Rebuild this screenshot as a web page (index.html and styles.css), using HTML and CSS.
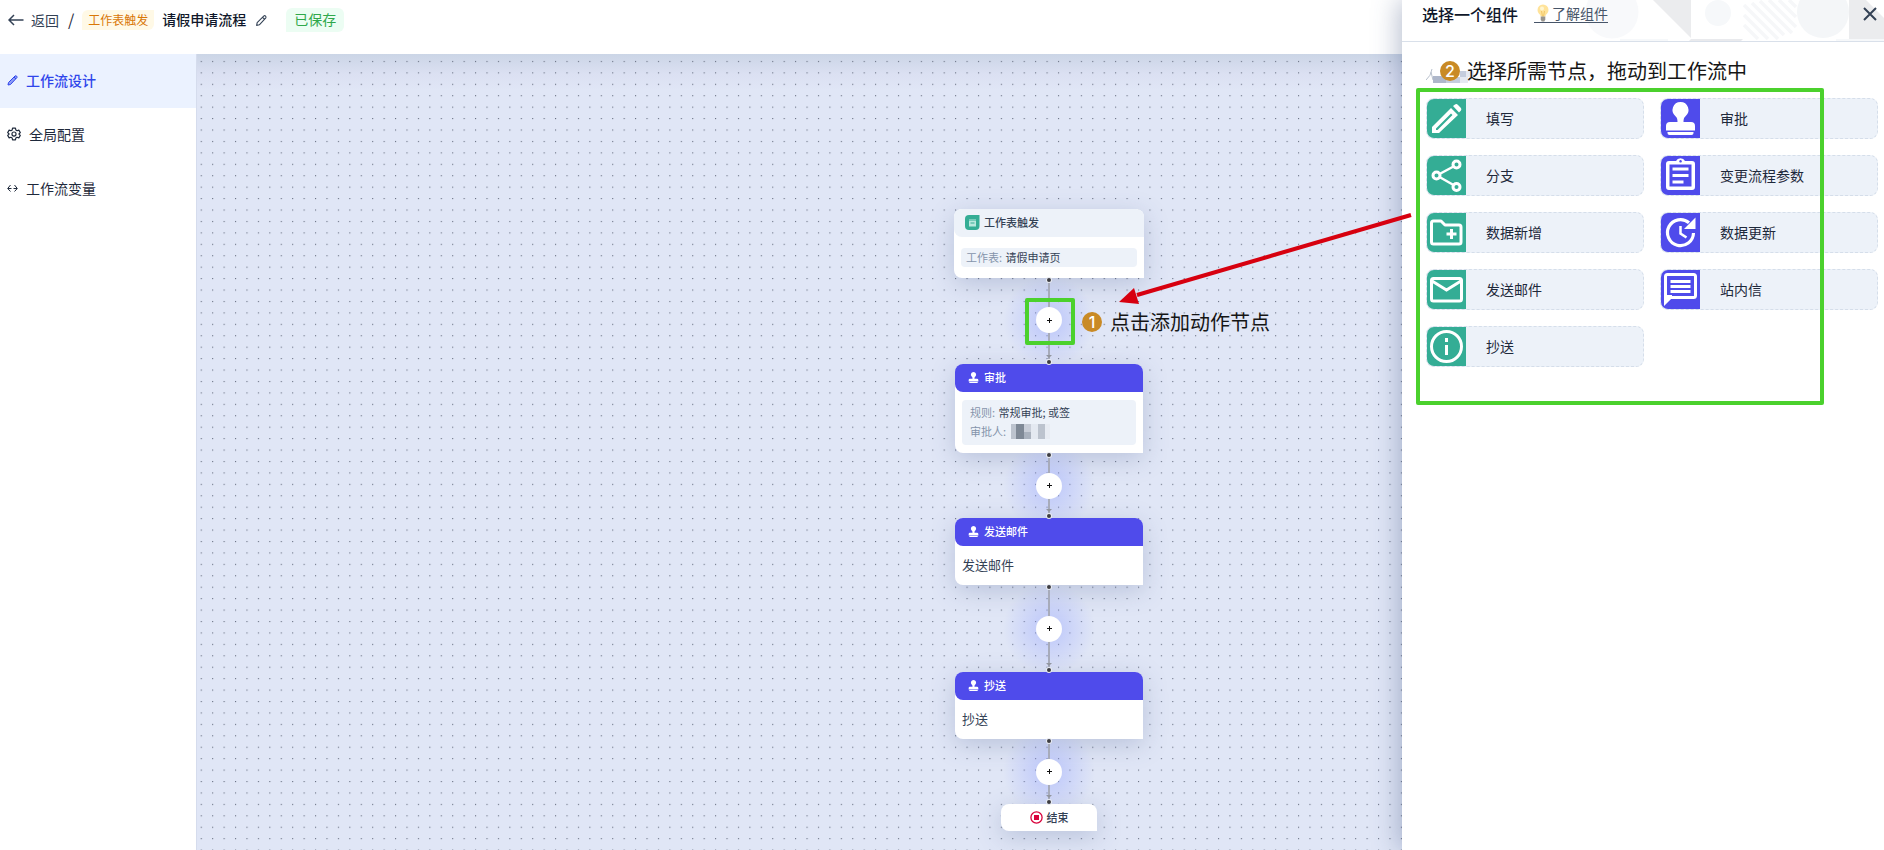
FILE: index.html
```html
<!DOCTYPE html>
<html lang="zh-CN">
<head>
<meta charset="utf-8">
<title>请假申请流程</title>
<link rel="stylesheet" href="styles.css">
</head>
<body>
<svg class="defs" aria-hidden="true">
  <symbol id="stamp" viewBox="0 0 39 39">
    <path fill="currentColor" d="M19.500 3a8 8 0 0 1 5 14.200c-1.500 1.400-2 2.500-2 5.800h7.500q4 0 4 4v4.500h-29V27q0-4 4-4h7.500c0-3.300-.5-4.400-2-5.800A8 8 0 0 1 19.500 3z"/>
    <path fill="currentColor" d="M6.500 33h26v1q0 2-2 2h-22q-2 0-2-2z"/>
  </symbol>
  <symbol id="pencil" viewBox="0 0 24 24">
    <path fill="none" stroke="currentColor" stroke-width="2" stroke-linejoin="round" d="M3 21l1-5L16.500 3.500q1.500-1 3 .5t.5 3L8 20zM14 6l4 4"/>
  </symbol>
</svg>

<div class="app">
  <header class="topbar">
    <button class="back" type="button">
      <svg width="16" height="12" viewBox="0 0 16 12"><path d="M15.500 6H1M6 1L1 6l5 5" fill="none" stroke="currentColor" stroke-width="1.500"/></svg>
      返回
    </button>
    <span class="slash">/</span>
    <span class="tag">工作表触发</span>
    <h1 class="title">请假申请流程</h1>
    <button class="edit" type="button" aria-label="编辑名称"><svg width="13" height="13"><use href="#pencil"/></svg></button>
    <span class="saved">已保存</span>
  </header>

  <div class="body">
    <nav class="sidebar">
      <a class="nav-item active" href="#design"><svg width="11" height="11" viewBox="0 0 11 11"><path d="M1 10l.5-2.500L8 1q1-.5 1.500 0t.5 1.500L3.500 9.500zM7 2l2 2" fill="currentColor" fill-opacity=".5" stroke="currentColor"/></svg>工作流设计</a>
      <a class="nav-item" href="#config"><svg width="14" height="14" viewBox="0 0 24 24" fill="none" stroke="currentColor" stroke-width="2" stroke-linejoin="round"><path d="M9.500 2h5l.7 3.200 2 1.200 3.100-1 2.500 4.300L20.400 12l2.400 2.300-2.500 4.300-3.100-1-2 1.200-.7 3.200h-5l-.7-3.200-2-1.200-3.100 1-2.500-4.300L3.600 12 1.200 9.700l2.500-4.300 3.100 1 2-1.200z"/><circle cx="12" cy="12" r="3.500"/></svg>全局配置</a>
      <a class="nav-item" href="#vars"><svg width="11" height="9" viewBox="0 0 11 9"><path d="M3.500 1L.7 4.500l2.800 3M7.500 1l2.800 3.500-2.800 3M1 4.500h3.500M6.500 4.500H10" fill="none" stroke="currentColor"/></svg>工作流变量</a>
    </nav>

    <main class="canvas">
      <svg class="dots" aria-hidden="true">
        <defs><pattern id="grid" x="3.700" y="6.900" width="11.430" height="11.430" patternUnits="userSpaceOnUse"><rect width="1.100" height="1.100" fill="#646c7e"/></pattern></defs>
        <rect width="100%" height="100%" fill="url(#grid)"/>
      </svg>
      <div class="flow">
        <section class="node trigger">
          <h2 class="node-head"><svg width="15" height="15" viewBox="0 0 15 15"><path d="M4 0h10.500v11q0 4-4 4H4q-4 0-4-4V4q0-4 4-4z" fill="#34ad95"/><path d="M4 4h7v7.500H4z" fill="#b9e8de"/><path d="M4 5h7M5.500 8h4" stroke="#34ad95"/></svg>工作表触发</h2>
          <div class="node-body"><p class="field"><span class="key">工作表:</span> 请假申请页</p></div>
        </section>
        <div class="link first"><button class="add" type="button" aria-label="添加节点"></button></div>

        <section class="node action">
          <h2 class="node-head"><svg width="13" height="13"><use href="#stamp"/></svg>审批</h2>
          <div class="node-body rules">
            <div class="field tall">
              <p><span class="key">规则:</span> 常规审批; 或签</p>
              <p class="person"><span class="key">审批人:</span>
                <svg width="40" height="15" viewBox="0 0 40 15"><path fill="#bcc3ce" d="M0 0h5v15H0z"/><path fill="#7f8996" d="M5 0h8v15H5z"/><path fill="#c9ced8" d="M13 0h7v8h-7z"/><path fill="#aab2be" d="M13 8h7v7h-7z"/><path fill="#e4e9f1" d="M20 0h7v15h-7z"/><path fill="#bcc3ce" d="M27 0h7v15h-7z"/><path fill="#e8ecf3" d="M34 0h5v15h-5z"/></svg></p>
            </div>
          </div>
        </section>
        <div class="link short"><button class="add" type="button" aria-label="添加节点"></button></div>

        <section class="node action">
          <h2 class="node-head"><svg width="13" height="13"><use href="#stamp"/></svg>发送邮件</h2>
          <p class="node-body plain">发送邮件</p>
        </section>
        <div class="link"><button class="add" type="button" aria-label="添加节点"></button></div>

        <section class="node action">
          <h2 class="node-head"><svg width="13" height="13"><use href="#stamp"/></svg>抄送</h2>
          <p class="node-body plain">抄送</p>
        </section>
        <div class="link short"><button class="add" type="button" aria-label="添加节点"></button></div>

        <div class="end"><svg width="13" height="13" viewBox="0 0 13 13"><circle cx="6.500" cy="6.500" r="5.600" fill="none" stroke="#d9043d" stroke-width="1.300"/><path d="M4 4h5v5H4z" fill="#d9043d"/></svg>结束</div>
      </div>
    </main>
  </div>

  <aside class="drawer">
    <div class="drawer-head">
      <svg class="decor" width="304" height="41" viewBox="0 0 304 41" aria-hidden="true">
        <circle cx="32" cy="12" r="26.500" fill="#f8f9fb"/>
        <path d="M73 0h38v38z" fill="#ebecee"/>
        <circle cx="138" cy="13" r="13" fill="#f6f8fa"/>
        <path d="M164 5l34 34M164 15l24 24M164 25l14 14M172 3l32 32M180 1l32 32M189 0l27 27M199 0l17 17M209 0l7 7" stroke="#f6f7f9" stroke-width="3.500"/>
        <circle cx="243" cy="12" r="26" fill="#f4f6f8"/>
        <path d="M269 0h17l18 18v21h-35z" fill="#ebecee"/>
        <path d="M111 39h52l-2 2h-52z" fill="#e9eaed"/>
        <path d="M40 39h48v2H40zM256 39h48v2h-48z" fill="#f6f8fa"/>
      </svg>
      <h2 class="drawer-title">选择一个组件</h2>
      <a class="learn" href="#learn"><svg width="18" height="18" viewBox="0 0 18 18"><circle cx="9" cy="6" r="5.500" fill="#ffe39a"/><path d="M5 8.500q1.500 1.500 1.500 4h5q0-2.500 1.500-4z" fill="#ffe39a"/><path d="M7.500 7l1 5.500M10.500 7l-1 5.500" stroke="#f2c766" fill="none"/><circle cx="8" cy="4.500" r="2" fill="#fff6d2"/><path d="M6.700 12.500h4.600v3l-1 2H7.700l-1-2z" fill="#99958e"/></svg>了解组件</a>
      <button class="close" type="button" aria-label="关闭"><svg width="14" height="14" viewBox="0 0 14 14"><path d="M1 1l12 12M13 1L1 13" stroke="currentColor" stroke-width="2"/></svg></button>
    </div>

    <div class="drawer-note">
      <svg class="smudge" width="48" height="15" viewBox="0 0 48 15" aria-hidden="true"><path d="M6 0Q5 7 0 11M5 3l2 8" stroke="#b7bfcb" fill="none"/><path fill="#aeb7ca" d="M7 7h13v7H7z"/><path fill="#c5cddd" d="M34 2h6v6h-6zM20 8h14v6H20z"/><path fill="#e5e9f1" d="M34 8h8v6h-8zM40 2h8v6h-8z"/></svg>
      <span class="badge">2</span>
      <p class="note">选择所需节点，拖动到工作流中</p>
    </div>

    <div class="cards">
      <button class="card" type="button"><span class="tile green"><svg viewBox="0 0 39 39"><path fill="#fff" fill-rule="evenodd" d="M5 28L24 9l7 7-19 18H5zm4 1.500v1.500h1.500L25.500 16 24 14.500zM26 7l2-1.500q1.500-1 3 .5l2.500 2.500q1.500 1.500.5 3L32 13.500z"/></svg></span>填写</button>
      <button class="card" type="button"><span class="tile blue"><svg><use href="#stamp"/></svg></span>审批</button>
      <button class="card" type="button"><span class="tile green"><svg viewBox="0 0 39 39" fill="none" stroke="#fff" stroke-width="3"><circle cx="29.500" cy="8.500" r="3.500"/><circle cx="9.500" cy="19.500" r="3.500"/><circle cx="29.500" cy="31" r="3.500"/><path stroke-width="2.500" d="M26.500 10.500L12.500 18M12.500 21l14 8"/></svg></span>分支</button>
      <button class="card" type="button"><span class="tile blue"><svg viewBox="0 0 39 39"><path fill="#fff" fill-rule="evenodd" d="M8 5h7a5 5 0 0 1 9 0h7q3 0 3 3v23q0 3-3 3H8q-3 0-3-3V8q0-3 3-3zm.5 3.500v22h22v-22zM19.500 4a1.300 1.300 0 1 0 .1 0z"/><path stroke="#fff" stroke-width="3" d="M11.500 13h16M11.500 19.500h16M11.500 26h11"/></svg></span>变更流程参数</button>
      <button class="card" type="button"><span class="tile green"><svg viewBox="0 0 39 39" fill="none" stroke="#fff"><path stroke-width="3" stroke-linejoin="round" d="M4.500 10q0-2 2-2H14l4 4h14q2 0 2 2v15q0 2-2 2H6.500q-2 0-2-2z"/><path stroke-width="3" d="M24.500 16v10M19.500 21h10"/></svg></span>数据新增</button>
      <button class="card" type="button"><span class="tile blue"><svg viewBox="0 0 39 39"><path fill="none" stroke="#fff" stroke-width="3.200" d="M32.500 20A13 13 0 1 1 28 9.800"/><path fill="#fff" d="M34.500 4.500V16H23z"/><path fill="none" stroke="#fff" stroke-width="2.500" d="M19.500 13v7.500l6 4"/></svg></span>数据更新</button>
      <button class="card" type="button"><span class="tile green"><svg viewBox="0 0 39 39" fill="none" stroke="#fff" stroke-width="3"><rect x="4.500" y="8.500" width="30" height="22.500" rx="2"/><path d="M5 11l14.500 9L34 11"/></svg></span>发送邮件</button>
      <button class="card" type="button"><span class="tile blue"><svg viewBox="0 0 39 39" fill="none" stroke="#fff" stroke-width="3"><path d="M4.500 6.500q0-2 2-2h26q2 0 2 2v19q0 2-2 2H9L4.500 32z"/><path fill="#fff" stroke="none" d="M3 25h8v3l-8 8z"/><path d="M9.500 11.500h20M9.500 16.500h20M9.500 21.500h20"/></svg></span>站内信</button>
      <button class="card" type="button"><span class="tile green"><svg viewBox="0 0 39 39" fill="none" stroke="#fff" stroke-width="3"><circle cx="19.500" cy="19.500" r="15"/><path d="M19.500 11v4M19.500 18v10"/></svg></span>抄送</button>
    </div>
    <div class="frame frame-cards"></div>
  </aside>

  <div class="frame frame-add"></div>
  <div class="step"><span class="badge">1</span><p class="note">点击添加动作节点</p></div>
  <svg class="arrow" width="294" height="94" viewBox="0 0 294 94" aria-hidden="true"><path d="M292 4L18 84" stroke="#d7000f" stroke-width="4"/><path d="M0 91L15 77l5 16z" fill="#d7000f"/></svg>
</div>
</body>
</html>
```
FILE: styles.css
```css
* { box-sizing: border-box; }

body {
  margin: 0;
  font-family: "Noto Sans CJK SC", "Noto Sans", sans-serif;
  font-size: 14px;
  line-height: 20px;
  color: #1e293b;
  background: #fff;
}

h1, h2, p { margin: 0; }

button {
  padding: 0;
  border: 0;
  background: none;
  font: inherit;
  color: inherit;
}

a { color: inherit; text-decoration: none; }

svg { display: block; flex: none; }

.defs { position: absolute; width: 0; height: 0; }

.app {
  position: relative;
  display: flex;
  flex-direction: column;
  height: 100vh;
  overflow: hidden;
}

/* Top bar */
.topbar {
  display: flex;
  align-items: flex-start;
  height: 54px;
  padding: 8px;
}

.topbar > * { height: 24px; line-height: 23px; }

.back { display: flex; align-items: center; gap: 7px; color: #334155; }

.slash { margin: 0 8px 0 9px; font-size: 16px; }

.topbar .tag {
  height: 20px;
  margin: 2px 8px 0 0;
  padding: 0 6px;
  border-radius: 6px 0;
  background: #fff9e6;
  color: #d97706;
  font-size: 12px;
  line-height: 19px;
}

.title { font-size: 14px; font-weight: 500; color: #0f172a; }

.edit { display: flex; align-items: center; margin: 0 18px 0 9px; color: #334155; }

.saved {
  padding: 0 8px;
  border-radius: 6px 6px 6px 0;
  background: #ecfdf3;
  color: #2fa84a;
}

/* Body */
.body { display: flex; flex: 1; min-height: 0; }

.sidebar { width: 196px; flex: none; }

.nav-item {
  display: flex;
  align-items: center;
  gap: 8px;
  height: 54px;
  padding: 0 7px 2px;
}

.nav-item.active { background: #ebf2ff; color: #2f46eb; font-weight: 500; }

.canvas {
  position: relative;
  flex: 1;
  overflow: hidden;
  border-left: 1px solid #d5dced;
  background: linear-gradient(#cbd5e6, #dbe0f2 20px, #e0e6f6 36px);
}

.dots { position: absolute; inset: 0; width: 100%; height: 100%; }

.flow {
  position: absolute;
  left: 757px;
  top: 155px;
  width: 190px;
  display: flex;
  flex-direction: column;
  align-items: center;
}

.node {
  width: 188px;
  border-radius: 8px 8px 0 8px;
  background: #fff;
  box-shadow: 0 6px 24px rgba(71, 91, 140, .25);
  font-size: 11px;
  line-height: 19px;
  color: #334155;
}

.trigger { width: 190px; }

.node-head {
  display: flex;
  align-items: center;
  gap: 4px;
  height: 28px;
  padding: 0 11px 1px;
  border-radius: 8px 8px 0 8px;
  background: #edf2f9;
  font-size: 11px;
  font-weight: 500;
}

.action .node-head { padding-left: 12px; background: #4f4beb; color: #fff; }

.node-body { padding: 11px 7px; }

.field { padding: 0 5px; border-radius: 4px; background: #edf2f9; }

.field.tall { padding: 3px 8px 4px; }

.person { display: flex; align-items: center; gap: 4px; }

.node-body.rules { padding: 8px 7px; }

.key { margin-right: 1px; color: #8594ab; }

.node-body.plain { padding: 9px 7px 10px; font-size: 13px; line-height: 20px; }

/* Connector between two nodes */
.link {
  position: relative;
  display: flex;
  align-items: center;
  justify-content: center;
  width: 120px;
  height: 87px;
  background:
    linear-gradient(#a7abba, #a7abba) center / 2px 100% no-repeat,
    radial-gradient(circle at center, rgba(150, 165, 255, .5), rgba(150, 165, 255, 0) 46px);
}

.link.first { height: 86px; padding-bottom: 2px; }

.link.short { height: 65px; }

.link::before,
.link::after {
  content: "";
  position: absolute;
  left: 58px;
  width: 4px;
  height: 4px;
  border-radius: 50%;
  background: #3d3d42;
  box-shadow: 0 0 0 1px #e8ebf2;
}

.link::before { top: 0; }

.link::after { bottom: 0; }

.add {
  width: 26px;
  height: 26px;
  border-radius: 50%;
  background:
    linear-gradient(#111, #111) center / 5px 1px no-repeat,
    linear-gradient(#111, #111) center / 1px 5px no-repeat,
    #fff;
}

.add::after {
  content: "";
  position: absolute;
  left: 57px;
  bottom: 6px;
  border: 3px solid transparent;
  border-top-color: #92969f;
  border-bottom: 0;
}

.end {
  display: flex;
  align-items: center;
  justify-content: center;
  gap: 4px;
  width: 96px;
  height: 27px;
  padding-bottom: 1px;
  border-radius: 8px 8px 0 8px;
  background: #fff;
  box-shadow: 0 6px 24px rgba(71, 91, 140, .25);
  font-size: 11px;
  font-weight: 500;
  color: #334155;
}

/* Component drawer */
.drawer {
  position: absolute;
  top: 0;
  right: 0;
  bottom: 0;
  width: 482px;
  background: #fff;
  box-shadow: -4px 0 24px rgba(60, 80, 125, .35);
}

.drawer-head {
  position: relative;
  display: flex;
  align-items: center;
  height: 42px;
  padding: 0 7px 14px 20px;
  border-bottom: 1px solid #d9e0ea;
}

.decor { position: absolute; top: 0; right: 0; }

.drawer-title { font-size: 16px; font-weight: 500; color: #0f172a; }

.learn {
  position: relative;
  display: flex;
  align-items: center;
  height: 18px;
  margin-left: 16px;
  border-bottom: 1px solid #475569;
  color: #475569;
}

.close { position: relative; margin-left: auto; color: #334155; }

.drawer-note {
  position: relative;
  display: flex;
  align-items: center;
  gap: 7px;
  padding: 14px 38px 12px;
}

.smudge { position: absolute; left: 24px; top: 27px; }

.badge {
  position: relative;
  width: 20px;
  height: 20px;
  border-radius: 50%;
  background: #c98a25;
  color: #fff;
  font: 500 16px/20px Inter, sans-serif;
  text-align: center;
}

.note { position: relative; font-size: 20px; line-height: 30px; color: #151515; }

.cards {
  display: grid;
  grid-template-columns: 1fr 1fr;
  gap: 16px;
  padding: 0 6px 0 24px;
}

.card {
  display: flex;
  align-items: center;
  gap: 20px;
  height: 41px;
  padding-bottom: 2px;
  overflow: hidden;
  border: 1px dashed #d5deea;
  border-radius: 8px;
  background: #edf2f9;
}

.tile { align-self: flex-start; width: 39px; height: 39px; color: #fff; }

.tile svg { width: 39px; height: 39px; }

.green { background: #34ad95; }

.blue { background: #4f4beb; }

/* Guide marks laid over the page */
.frame { position: absolute; border: 4px solid #4bd12d; border-radius: 2px; pointer-events: none; }

.frame-cards { left: 14px; top: 88px; width: 408px; height: 317px; }

.frame-add { left: 1025px; top: 298px; width: 50px; height: 47px; }

.step {
  position: absolute;
  left: 1082px;
  top: 307px;
  display: flex;
  align-items: center;
  gap: 8px;
}

.arrow { position: absolute; left: 1119px; top: 211px; }
```
